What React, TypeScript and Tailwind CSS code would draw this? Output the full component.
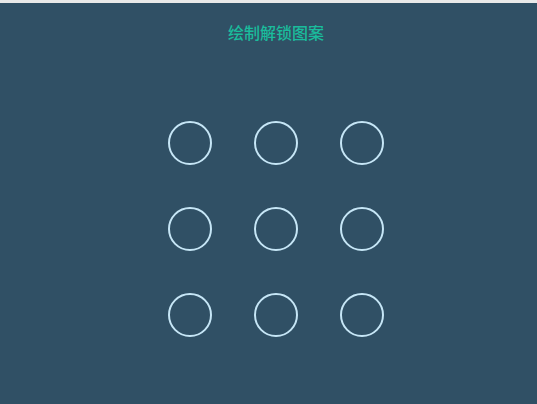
const cells = Array.from({ length: 9 }, (_, i) => i);

export default function App() {
  return (
    <div className="flex h-[404px] w-full flex-col bg-[#305065]">
      <div className="h-[3px] w-full bg-[#e9e9e9]" />
      <div className="flex flex-col items-center pl-[15px]">
        <h1
          className="mt-[18px] text-[16px] font-medium leading-[22px] text-[#1abc9c]"
          style={{ fontFamily: '"Noto Sans CJK SC", "Noto Sans", sans-serif' }}
        >
          绘制解锁图案
        </h1>
        <div className="mt-[78px] grid grid-cols-3 gap-x-[42px] gap-y-[42px]">
          {cells.map((i) => (
            <svg key={i} width="44" height="44" viewBox="0 0 44 44">
              <circle cx="22" cy="22" r="21" fill="none" stroke="#c6e6f6" strokeWidth="2" />
            </svg>
          ))}
        </div>
      </div>
    </div>
  );
}
